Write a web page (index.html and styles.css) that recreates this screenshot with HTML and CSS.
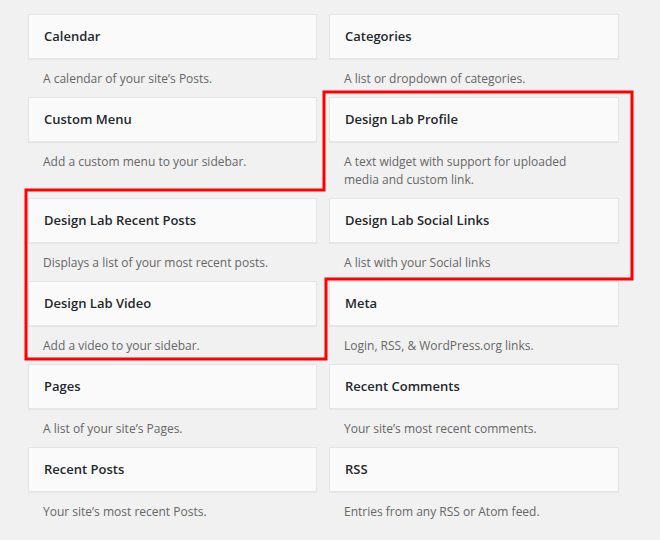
FILE: index.html
```html
<!DOCTYPE html>
<html lang="en">
    <head>
        <meta charset="UTF-8" />
        <meta name="viewport" content="width=device-width, initial-scale=1.0" />
        <title>Widgets</title>
        <link rel="stylesheet" href="styles.css">
    </head>
    <body>
        <div class="widget-list">
            <div class="widget">
                <div class="widget-top">Calendar</div>
                <div class="widget-description">A calendar of your site’s Posts.</div>
            </div>
            <div class="widget">
                <div class="widget-top">Categories</div>
                <div class="widget-description">A list or dropdown of categories.</div>
            </div>
            <div class="widget">
                <div class="widget-top">Custom Menu</div>
                <div class="widget-description">Add a custom menu to your sidebar.</div>
            </div>
            <div class="widget">
                <div class="widget-top">Design Lab Profile</div>
                <div class="widget-description">A text widget with support for uploaded media and custom link.</div>
            </div>
            <div class="widget">
                <div class="widget-top">Design Lab Recent Posts</div>
                <div class="widget-description">Displays a list of your most recent posts.</div>
            </div>
            <div class="widget">
                <div class="widget-top">Design Lab Social Links</div>
                <div class="widget-description">A list with your Social links</div>
            </div>
            <div class="widget">
                <div class="widget-top">Design Lab Video</div>
                <div class="widget-description">Add a video to your sidebar.</div>
            </div>
            <div class="widget">
                <div class="widget-top">Meta</div>
                <div class="widget-description">Login, RSS, &amp; WordPress.org links.</div>
            </div>
            <div class="widget">
                <div class="widget-top">Pages</div>
                <div class="widget-description">A list of your site’s Pages.</div>
            </div>
            <div class="widget">
                <div class="widget-top">Recent Comments</div>
                <div class="widget-description">Your site’s most recent comments.</div>
            </div>
            <div class="widget">
                <div class="widget-top">Recent Posts</div>
                <div class="widget-description">Your site’s most recent Posts.</div>
            </div>
            <div class="widget">
                <div class="widget-top">RSS</div>
                <div class="widget-description">Entries from any RSS or Atom feed.</div>
            </div>
        </div>

        <!-- highlight round the Design Lab widgets -->
        <svg class="highlight" width="660" height="540" viewBox="0 0 660 540">
            <polygon points="324,92 632,92 632,279 326,279 326,359 26,359 26,190 324,190"
                fill="none" stroke="#f00" stroke-width="3" />
        </svg>
    </body>
</html>
```

FILE: styles.css
```css
* {
    margin: 0;
    padding: 0;
    box-sizing: border-box;
}

html,
body {
    width: 100%;
    height: 100%;
    background-color: #f1f1f1;
}

body {
    position: relative;
    font-family: "Open Sans", "Liberation Sans", sans-serif;
    font-size: 13px;
    overflow: hidden;
}

.widget-list {
    display: grid;
    grid-template-columns: 289px 290px;
    column-gap: 12px;
    padding: 14px 0 0 28px;
}

.widget-top {
    height: 45px;
    line-height: 43px;
    padding: 0 15px;
    font-weight: 600;
    color: #23282d;
    background-color: #fafafa;
    border: 1px solid #e5e5e5;
    box-shadow: 0 1px 1px rgba(0, 0, 0, 0.04);
}

.widget-description {
    padding: 11px 30px 9px 15px;
    font-size: 12px;
    line-height: 18px;
    color: #666;
}

.highlight {
    position: absolute;
    top: 0;
    left: 0;
    pointer-events: none;
}
```
